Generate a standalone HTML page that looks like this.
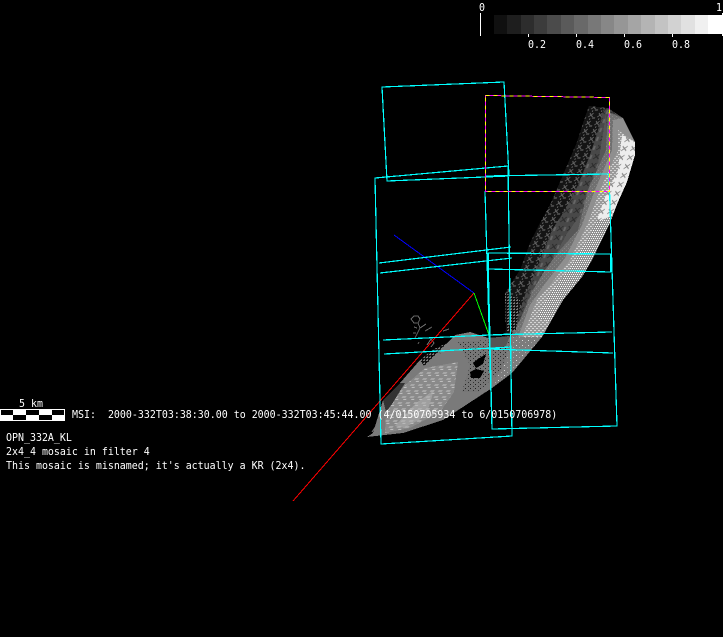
<!DOCTYPE html>
<html><head><meta charset="utf-8"><style>
html,body{margin:0;padding:0;background:#000;width:723px;height:637px;overflow:hidden}
svg{position:absolute;left:0;top:0;display:block}
text{font-family:"DejaVu Sans Mono","Liberation Mono",monospace;font-size:11px;fill:#fff;white-space:pre}
</style></head><body>
<svg width="723" height="637" viewBox="0 0 723 637" xmlns="http://www.w3.org/2000/svg">
<defs>
<pattern id="x1" width="9" height="8" patternUnits="userSpaceOnUse" patternTransform="skewX(-20)">
<rect width="9" height="8" fill="#141414"/><path d="M1 1l4 4M5 1l-4 4M5 6h3M3 6v2" stroke="#606060" fill="none" stroke-width="1" shape-rendering="crispEdges"/></pattern>
<pattern id="x2" width="10" height="9" patternUnits="userSpaceOnUse" patternTransform="skewX(-20)">
<rect width="10" height="9" fill="#484848"/><path d="M1 1l5 5M6 1l-5 5" stroke="#2c2c2c" fill="none" shape-rendering="crispEdges"/><path d="M7 2h2v4h-2z" fill="#666"/></pattern>
<pattern id="mid" width="4" height="4" patternUnits="userSpaceOnUse">
<rect width="4" height="4" fill="#707070"/><rect width="1" height="1" fill="#858585"/><rect x="2" y="2" width="1" height="1" fill="#858585"/></pattern>
<pattern id="lite" width="4" height="4" patternUnits="userSpaceOnUse">
<rect width="4" height="4" fill="#9a9a9a"/><rect width="2" height="1" fill="#d4d4d4"/><rect x="2" y="2" width="2" height="1" fill="#d4d4d4"/></pattern>
<pattern id="white" width="4" height="4" patternUnits="userSpaceOnUse">
<rect width="4" height="4" fill="#909090"/><rect width="1" height="1" fill="#fff"/><rect x="2" y="0" width="1" height="1" fill="#f0f0f0"/><rect x="1" y="2" width="1" height="1" fill="#fff"/><rect x="3" y="2" width="1" height="1" fill="#f0f0f0"/></pattern>
<pattern id="top" width="9" height="9" patternUnits="userSpaceOnUse" patternTransform="skewX(-20)">
<rect width="9" height="9" fill="#ededed"/><path d="M1 2l5 5M6 2l-5 5" stroke="#888" fill="none" shape-rendering="crispEdges"/></pattern>
<pattern id="dots" width="6" height="5" patternUnits="userSpaceOnUse">
<rect width="6" height="5" fill="#7c7c7c"/><rect width="1" height="1" fill="#ddd"/><rect x="3" y="2" width="1" height="1" fill="#aaa"/></pattern>
<pattern id="dd" width="3" height="3" patternUnits="userSpaceOnUse">
<rect width="3" height="3" fill="#111"/><rect width="2" height="1" fill="#777"/><rect x="1" y="2" width="1" height="1" fill="#666"/></pattern>
<pattern id="dd2" width="5" height="4" patternUnits="userSpaceOnUse">
<rect width="5" height="4" fill="#767676"/><rect width="1" height="1" fill="#222"/><rect x="3" y="2" width="1" height="1" fill="#333"/></pattern>
<pattern id="mott" width="8" height="6" patternUnits="userSpaceOnUse" patternTransform="skewX(-35)">
<rect width="8" height="6" fill="#8a8a8a"/><rect width="4" height="2" fill="#a8a8a8"/><rect x="3" y="3" width="3" height="1" fill="#c4c4c4"/></pattern>
</defs>

<!-- colorbar -->
<g shape-rendering="crispEdges">
<rect x="494" y="15" width="14" height="19" fill="#101010"/><rect x="507" y="15" width="14" height="19" fill="#1e1e1e"/><rect x="521" y="15" width="13" height="19" fill="#2d2d2d"/><rect x="534" y="15" width="14" height="19" fill="#3c3c3c"/><rect x="547" y="15" width="14" height="19" fill="#4b4b4b"/><rect x="561" y="15" width="13" height="19" fill="#5a5a5a"/><rect x="574" y="15" width="14" height="19" fill="#696969"/><rect x="588" y="15" width="13" height="19" fill="#787878"/><rect x="601" y="15" width="14" height="19" fill="#878787"/><rect x="614" y="15" width="14" height="19" fill="#969696"/><rect x="628" y="15" width="13" height="19" fill="#a5a5a5"/><rect x="641" y="15" width="14" height="19" fill="#b4b4b4"/><rect x="655" y="15" width="13" height="19" fill="#c3c3c3"/><rect x="668" y="15" width="14" height="19" fill="#d2d2d2"/><rect x="681" y="15" width="14" height="19" fill="#e1e1e1"/><rect x="695" y="15" width="13" height="19" fill="#f0f0f0"/><rect x="708" y="15" width="14" height="19" fill="#fff"/>
<rect x="480" y="13" width="1" height="23" fill="#fff"/><rect x="722" y="13" width="1" height="23" fill="#fff"/>
<rect x="528" y="34" width="1" height="3" fill="#fff"/><rect x="576" y="34" width="1" height="3" fill="#fff"/><rect x="624" y="34" width="1" height="3" fill="#fff"/><rect x="672" y="34" width="1" height="3" fill="#fff"/>
</g>
<text transform="translate(479 11) scale(.905 1)">0</text><text transform="translate(716 11) scale(.905 1)">1</text>
<text transform="translate(528 48) scale(.905 1)">0.2</text><text transform="translate(576 48) scale(.905 1)">0.4</text><text transform="translate(624 48) scale(.905 1)">0.6</text><text transform="translate(672 48) scale(.905 1)">0.8</text>

<!-- upper crescent -->
<g shape-rendering="crispEdges">
<polygon fill="url(#x1)" points="589,106 608,108 623,118 635,142 635,155 627,182 618,202 610,223 592,260 582,277 563,300 542,337 505,337 508,310 505,293 520,270 530,243 540,223 550,205 563,175 577,142 584,120"/>
<polygon fill="url(#x2)" points="603,110 608,108 623,118 635,142 635,155 627,182 618,202 610,223 592,260 582,277 563,300 542,337 512,337 525,295 540,260 552,230 565,210 578,185 590,155 598,130"/>
<polygon fill="#575757" points="606,114 608,150 592,190 580,215 566,235 552,262 538,290 522,322 530,325 560,262 590,215"/>
<polygon fill="url(#mid)" points="608,112 623,118 635,142 635,155 627,182 618,202 610,223 592,260 582,277 563,300 542,337 510,337 520,320 533,290 545,270 560,250 578,230 588,190 606,150"/>
<polygon fill="#8f8f8f" points="613,120 623,118 635,142 635,155 627,182 618,202 610,223 592,260 582,277 563,300 542,337 518,337 530,305 544,285 565,258 582,225 595,190 612,150"/>
<polygon fill="url(#lite)" points="618,130 635,142 635,155 627,182 618,202 610,223 592,260 582,277 563,300 542,337 522,337 537,300 550,285 570,260 587,225 600,190 618,150"/>
<polygon fill="url(#top)" points="622,135 635,142 635,155 627,182 618,202 612,216 596,222 606,195 618,170"/>
<polygon fill="url(#white)" points="596,222 612,216 610,223 592,260 582,277 563,300 550,322 537,318 548,296 570,268 588,238"/>
</g>

<!-- lower crescent -->
<g shape-rendering="crispEdges">
<polygon fill="url(#dots)" points="505,337 542,337 512,373 492,388 443,420 403,433 367,437 373,433 383,400 400,383 420,360 447,343 455,335 470,332 488,338"/>
<polygon fill="#7a7a7a" points="488,338 510,340 505,362 492,388 443,420 403,433 367,437 373,433 383,400 400,383 420,360 447,343 455,335 470,332"/>
<polygon fill="url(#mott)" points="425,368 458,362 454,392 440,412 410,428 385,433 386,410 402,388"/>
<polygon fill="#b4b4b4" opacity=".5" points="415,404 434,390 426,416 404,428 395,426"/>
<polygon fill="url(#dd2)" points="458,342 490,340 512,342 500,372 478,392 462,392 470,365"/>
<polygon fill="#555" points="488,338 510,336 506,346 490,350"/>
<polygon fill="url(#dd)" points="505,293 520,300 516,330 506,332"/>
<polygon fill="#000" points="470,372 476,369 484,371 480,378 471,378"/>
<polygon fill="#000" points="473,363 478,359 486,354 483,364 476,368"/>
<polygon fill="#333" points="383,400 400,383 405,383 392,404 386,412"/>
<polygon fill="url(#dd)" points="420,360 432,350 447,343 440,350 424,366"/>
</g>
<polyline fill="none" stroke="#777" points="372,432 378,423 388,416"/>

<!-- stick figure -->
<g fill="none" stroke="#666" shape-rendering="crispEdges">
<path d="M411 319l3-3h4l2 3-2 4h-4zM418 323l2 5-3 6-2 4M420 328l6-4M414 327l3 1M416 333l-3 0M425 331l7-4M419 342l-1 2M427 345l4-6M431 339l3 4-3 4M443 331l6-2M437 350l4 4"/>
</g>

<!-- axes -->
<g fill="none" shape-rendering="crispEdges">
<line x1="394" y1="235" x2="474" y2="293" stroke="#0000ff"/>
<line x1="474" y1="293" x2="293" y2="501" stroke="#ff0000"/>
<line x1="474" y1="293" x2="489" y2="335" stroke="#00ff00"/>
</g>

<!-- footprints -->
<g fill="none" stroke="#00ffff" stroke-width="1.2" shape-rendering="crispEdges">
<polygon points="382,87 504,82 509,176 387,181"/>
<polygon points="375,178 508,166 512,436 381,444"/>
<line x1="379" y1="263" x2="511" y2="247"/>
<line x1="380" y1="273" x2="512" y2="258"/>
<line x1="383" y1="340" x2="511" y2="334"/>
<line x1="384" y1="354" x2="511" y2="347"/>
<polyline points="485,176 609,174 617,426 492,429 488,253"/>
<line x1="485" y1="191" x2="492" y2="429"/>
<line x1="488" y1="253" x2="611" y2="254"/>
<line x1="488" y1="269" x2="611" y2="272"/>
<line x1="488" y1="335" x2="612" y2="332"/>
<line x1="489" y1="349" x2="613" y2="353"/>
<line x1="488" y1="253" x2="488" y2="270" stroke-width="2"/>
<line x1="611" y1="254" x2="611" y2="272" stroke-width="2"/>
</g>
<polygon points="485.5,95.5 609.5,97.5 609.5,191.5 485.5,191.5" fill="none" stroke="#ff00ff" shape-rendering="crispEdges"/>
<polygon points="485.5,95.5 609.5,97.5 609.5,191.5 485.5,191.5" fill="none" stroke="#ffff00" stroke-dasharray="4 4" shape-rendering="crispEdges"/>

<!-- scale bar -->
<g shape-rendering="crispEdges">
<rect x="0" y="409" width="65" height="12" fill="#fff"/>
<rect x="1" y="410" width="12" height="5" fill="#000"/><rect x="26" y="410" width="13" height="5" fill="#000"/><rect x="52" y="410" width="12" height="5" fill="#000"/>
<rect x="13" y="415" width="13" height="5" fill="#000"/><rect x="39" y="415" width="13" height="5" fill="#000"/>
</g>
<text transform="translate(19 407) scale(.905 1)">5 km</text>
<text transform="translate(72 418) scale(.905 1)">MSI:  2000-332T03:38:30.00 to 2000-332T03:45:44.00 (4/0150705934 to 6/0150706978)</text>
<text transform="translate(6 441) scale(.905 1)">OPN_332A_KL</text>
<text transform="translate(6 455) scale(.905 1)">2x4_4 mosaic in filter 4</text>
<text transform="translate(6 469) scale(.905 1)">This mosaic is misnamed; it's actually a KR (2x4).</text>
</svg>
</body></html>
